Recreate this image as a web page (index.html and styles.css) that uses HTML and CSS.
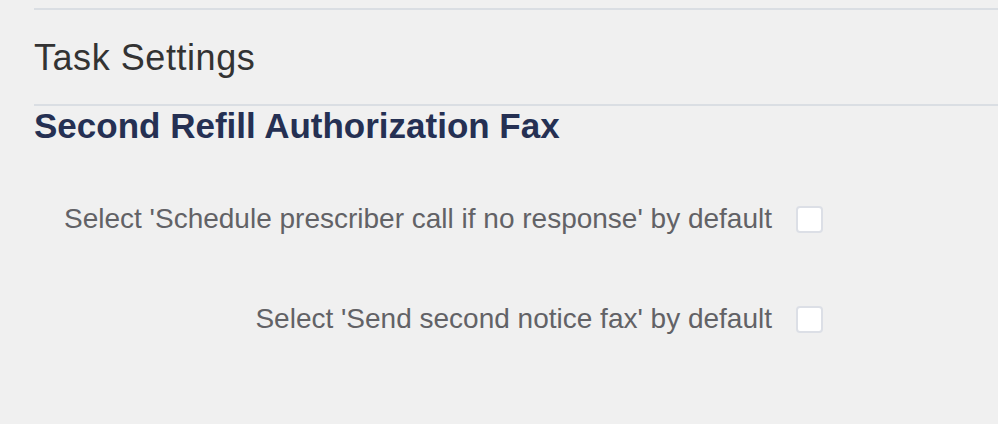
FILE: index.html
```html
<!DOCTYPE html>
<html>
<head>
<meta charset="utf-8">
<link rel="stylesheet" href="styles.css">
</head>
<body>
<div class="page">
  <hr class="rule rule-top">
  <h2 class="title">Task Settings</h2>
  <hr class="rule">
  <h3 class="section">Second Refill Authorization Fax</h3>
  <div class="settings">
    <label class="row">
      <span class="label">Select 'Schedule prescriber call if no response' by default</span>
      <input type="checkbox" class="check">
    </label>
    <label class="row">
      <span class="label">Select 'Send second notice fax' by default</span>
      <input type="checkbox" class="check">
    </label>
  </div>
</div>
</body>
</html>
```

FILE: styles.css
```css
html, body {
  margin: 0;
  padding: 0;
  background: #f0f0f0;
}
body {
  font-family: "Liberation Sans", Arial, Helvetica, sans-serif;
}
.page {
  padding-left: 34px;
  padding-top: 8px;
}
.rule {
  border: 0;
  height: 2px;
  background: #dadee3;
  margin: 0;
}
.title {
  margin: 28px 0 26px 0;
  font-size: 36px;
  line-height: 40px;
  font-weight: normal;
  letter-spacing: 0.55px;
  color: #333333;
}
.section {
  margin: 0;
  font-size: 35px;
  line-height: 40px;
  font-weight: bold;
  color: #253053;
}
.settings {
  margin-top: 48px;
  display: flex;
  flex-direction: column;
  gap: 50px;
}
.row {
  display: grid;
  grid-template-columns: 738px 27px;
  column-gap: 24px;
  align-items: center;
  height: 50px;
}
.label {
  text-align: right;
  font-size: 28px;
  color: #626266;
}
.check {
  appearance: none;
  -webkit-appearance: none;
  margin: 0;
  width: 27px;
  height: 27px;
  box-sizing: border-box;
  background: #ffffff;
  border: 2px solid #dcdfe6;
  border-radius: 4px;
}
```
